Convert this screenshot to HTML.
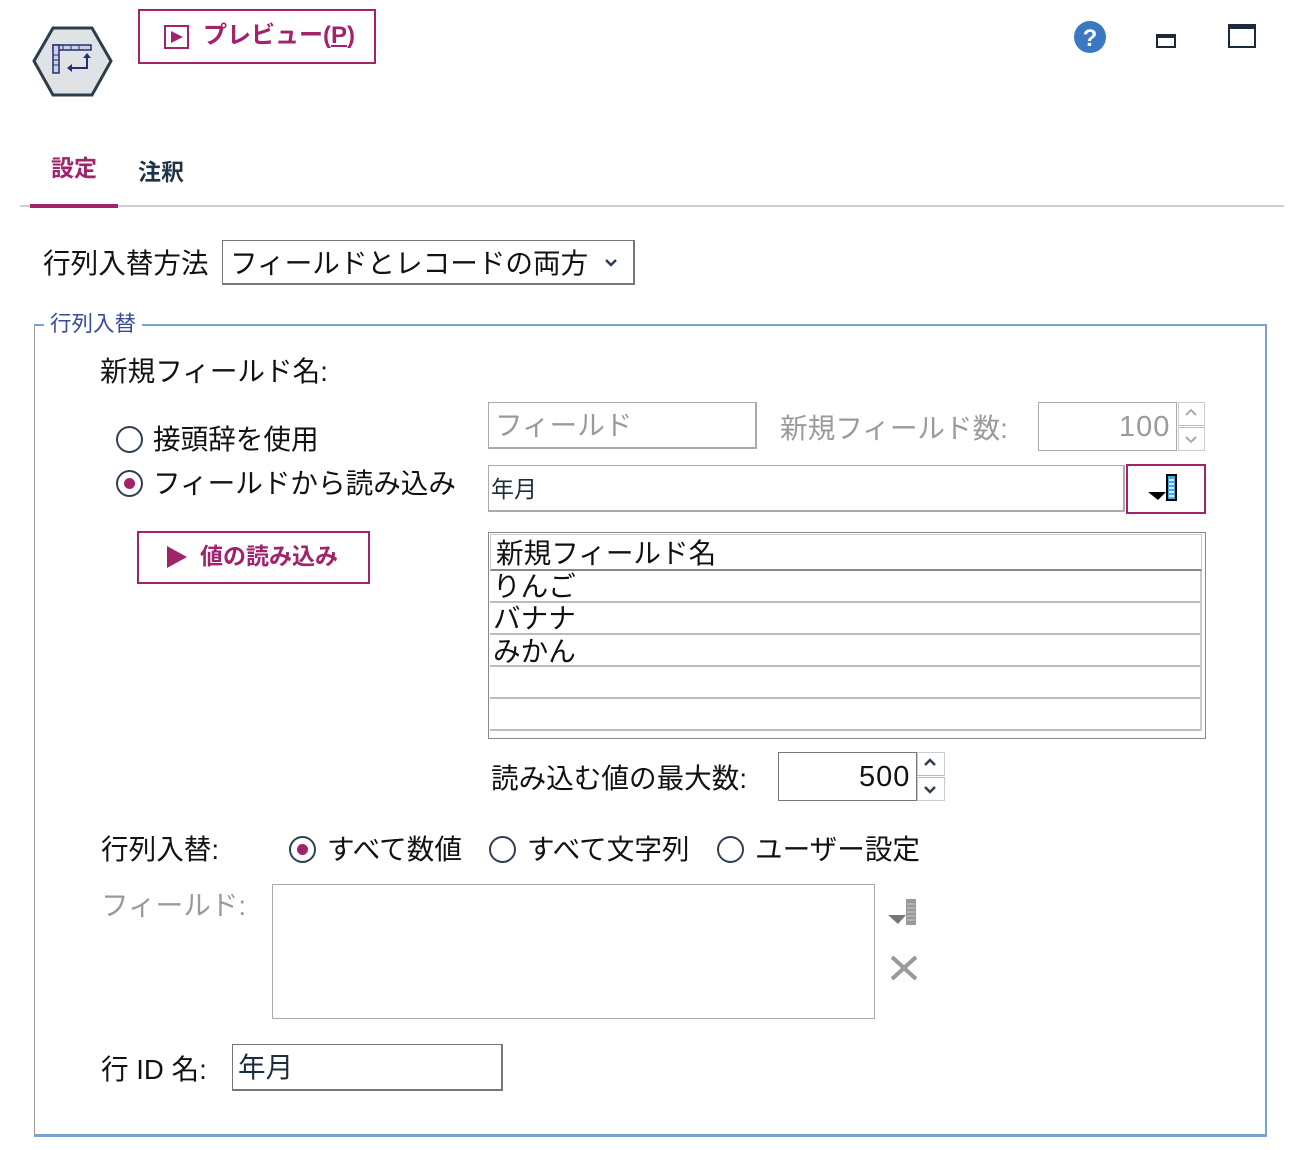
<!DOCTYPE html>
<html><head><meta charset="utf-8"><style>
*{margin:0;padding:0;box-sizing:border-box}
body{width:1302px;height:1150px;background:#fff;position:relative;overflow:hidden;font-family:"Liberation Sans","Noto Sans CJK JP",sans-serif;color:#111}
.a{position:absolute;white-space:nowrap;line-height:1}
.f26{font-size:27.6px}
.num{font-size:29px;letter-spacing:1px}
.box{position:absolute;background:#fff}
.radio{position:absolute;width:27px;height:27px;border:2px solid #2f3f4f;border-radius:50%;background:#fff}
.radio.on::after{content:"";position:absolute;left:6px;top:6px;width:11px;height:11px;border-radius:50%;background:#a0236c}
.gray{color:#9a9a9a}
</style></head><body>

<!-- node icon -->
<svg class="a" style="left:30px;top:24px" width="84" height="76" viewBox="30 24 84 76">
<polygon points="34,61 53,28 92,28 111,61 92,95 53,95" fill="#e0e3e6" stroke="#2c3e4c" stroke-width="3"/>
<rect x="53" y="45" width="38" height="5" fill="#c8d0e8" stroke="#27306e" stroke-width="1.5"/>
<path d="M63 45V50M71 45V50M79 45V50" stroke="#27306e" stroke-width="1"/>
<rect x="53" y="45" width="6" height="28" fill="#c8d0e8" stroke="#27306e" stroke-width="1.5"/>
<path d="M53 55H59M53 60H59M53 65H59" stroke="#27306e" stroke-width="1"/>
<path d="M87 55 V68 H72" fill="none" stroke="#27306e" stroke-width="2"/>
<path d="M83 58 L87 53 L91 58Z M72 64 L67 68 L72 72Z" fill="#27306e"/>
</svg>

<!-- preview button -->
<div class="box" style="left:138px;top:9px;width:238px;height:55px;border:2px solid #a0236c"></div>
<div class="box" style="left:164px;top:25px;width:25px;height:24px;border:2px solid #a0236c"></div>
<svg class="a" style="left:170px;top:30px" width="14" height="14"><path d="M1 1 L13 7 L1 13Z" fill="#a0236c"/></svg>
<div class="a" style="left:203px;top:24px;font-size:24px;font-weight:bold;color:#a0236c">プレビュー(<u>P</u>)</div>

<!-- top-right icons -->
<svg class="a" style="left:1073px;top:20px" width="34" height="34"><circle cx="17" cy="17" r="16" fill="#3a78c2"/><text x="17" y="26" text-anchor="middle" font-family="Liberation Sans" font-weight="bold" font-size="24" fill="#fff">?</text></svg>
<div class="box" style="left:1156px;top:34px;width:20px;height:14px;border:2px solid #1b2a38;border-top-width:4px"></div>
<div class="box" style="left:1228px;top:24px;width:28px;height:24px;border:2px solid #1b2a38;border-top-width:5px"></div>

<!-- tabs -->
<div class="a" style="left:51px;top:157px;font-size:23px;font-weight:bold;color:#a0236c">設定</div>
<div class="a" style="left:138px;top:161px;font-size:23px;font-weight:bold;color:#1e3345">注釈</div>
<div class="box" style="left:20px;top:205px;width:1264px;height:2px;background:#cfcfcf"></div>
<div class="box" style="left:30px;top:204px;width:88px;height:4px;background:#a0236c"></div>

<!-- method -->
<div class="a f26" style="left:43px;top:250px">行列入替方法</div>
<div class="box" style="left:222px;top:240px;width:413px;height:45px;border:1px solid #777;border-right-width:2px;border-bottom-width:2px"></div>
<div class="a f26" style="left:230px;top:250px">フィールドとレコードの両方</div>
<svg class="a" style="left:604px;top:258px" width="14" height="10"><path d="M2 2 L7 7 L12 2" fill="none" stroke="#2c3e50" stroke-width="2.5"/></svg>

<!-- group box -->
<div class="box" style="left:34px;top:324px;width:1233px;height:813px;border:1px solid #999;border-top:2px solid #78a3d0;border-right:2px solid #78a3d0;border-bottom:3px solid #78a3d0;background:transparent"></div>
<div class="a" style="left:44px;top:314px;font-size:21.5px;color:#3a4a9a;background:#fff;padding:0 6px">行列入替</div>

<div class="a f26" style="left:100px;top:358px">新規フィールド名:</div>

<div class="radio" style="left:116px;top:426px"></div>
<div class="a f26" style="left:153px;top:426px">接頭辞を使用</div>
<div class="radio on" style="left:116px;top:470px"></div>
<div class="a f26" style="left:153px;top:470px">フィールドから読み込み</div>

<div class="box" style="left:137px;top:531px;width:233px;height:53px;border:2px solid #a0236c"></div>
<svg class="a" style="left:166px;top:545px" width="22" height="24"><path d="M1 1 L21 12 L1 23Z" fill="#a0236c"/></svg>
<div class="a" style="left:200px;top:545px;font-size:23px;font-weight:bold;color:#a0236c">値の読み込み</div>

<div class="box" style="left:488px;top:402px;width:269px;height:47px;border:1px solid #aaa;border-right-width:2px;border-bottom-width:2px"></div>
<div class="a f26 gray" style="left:495px;top:412px">フィールド</div>
<div class="a f26 gray" style="left:780px;top:415px">新規フィールド数:</div>
<div class="box" style="left:1038px;top:402px;width:139px;height:49px;border:1px solid #aaa"></div>
<div class="a num gray" style="left:1119px;top:413px">100</div>
<div class="box" style="left:1178px;top:402px;width:27px;height:49px;border:1px solid #ccc"></div>
<div class="box" style="left:1178px;top:425px;width:27px;height:3px;border-top:1px solid #bbb;border-bottom:1px solid #bbb"></div>
<svg class="a" style="left:1184px;top:407px" width="14" height="40"><path d="M2 8 L7 3 L12 8 M2 30 L7 35 L12 30" fill="none" stroke="#aaa" stroke-width="2"/></svg>

<div class="box" style="left:488px;top:465px;width:637px;height:47px;border:1px solid #aaa;border-right-width:2px;border-bottom-width:2px"></div>
<div class="a" style="left:491px;top:478px;font-size:23px;color:#1e2d3b">年月</div>
<div class="box" style="left:1126px;top:464px;width:80px;height:50px;border:2px solid #a0236c"></div>
<svg class="a" style="left:1146px;top:472px" width="36" height="32"><path d="M2 20 H20 L12 28Z" fill="#000"/><rect x="21" y="3" width="9" height="25" fill="#4aa8e0" stroke="#000" stroke-width="2"/><path d="M23 8H28M23 12H28M23 16H28M23 20H28M23 24H28" stroke="#fff" stroke-width="1.5"/></svg>

<!-- table -->
<div class="box" style="left:488px;top:532px;width:718px;height:207px;border:1px solid #888"></div>
<div class="box" style="left:490px;top:534px;width:712px;height:37px;border:1px solid #ccc;border-bottom:2px solid #888"></div>
<div class="a f26" style="left:496px;top:540px">新規フィールド名</div>
<div class="box" style="left:490px;top:571px;width:712px;height:32px;border-bottom:2px solid #bbb"></div>
<div class="box" style="left:490px;top:603px;width:712px;height:32px;border-bottom:2px solid #bbb"></div>
<div class="box" style="left:490px;top:635px;width:712px;height:32px;border-bottom:2px solid #bbb"></div>
<div class="box" style="left:490px;top:667px;width:712px;height:32px;border-bottom:2px solid #bbb"></div>
<div class="box" style="left:490px;top:699px;width:712px;height:32px;border-bottom:2px solid #bbb"></div>
<div class="box" style="left:1200px;top:571px;width:2px;height:160px;background:#ccc"></div>
<div class="a f26" style="left:493px;top:573px">りんご</div>
<div class="a f26" style="left:493px;top:605px">バナナ</div>
<div class="a f26" style="left:493px;top:638px">みかん</div>

<div class="a f26" style="left:491px;top:765px">読み込む値の最大数:</div>
<div class="box" style="left:778px;top:752px;width:139px;height:49px;border:1px solid #777"></div>
<div class="a num" style="left:859px;top:763px">500</div>
<div class="box" style="left:917px;top:752px;width:28px;height:49px;border:1px solid #ccc"></div>
<div class="box" style="left:917px;top:775px;width:28px;height:3px;border-top:1px solid #bbb;border-bottom:1px solid #bbb"></div>
<svg class="a" style="left:923px;top:757px" width="14" height="40"><path d="M2 8 L7 3 L12 8 M2 30 L7 35 L12 30" fill="none" stroke="#2c3e50" stroke-width="2.5"/></svg>

<div class="a f26" style="left:101px;top:836px">行列入替:</div>
<div class="radio on" style="left:289px;top:836px"></div>
<div class="a f26" style="left:327px;top:836px">すべて数値</div>
<div class="radio" style="left:489px;top:836px"></div>
<div class="a f26" style="left:527px;top:836px">すべて文字列</div>
<div class="radio" style="left:717px;top:836px"></div>
<div class="a f26" style="left:755px;top:836px">ユーザー設定</div>

<div class="a f26 gray" style="left:101px;top:892px">フィールド:</div>
<div class="box" style="left:272px;top:884px;width:603px;height:135px;border:1px solid #aaa"></div>
<svg class="a" style="left:886px;top:897px" width="36" height="32"><path d="M2 18 H20 L12 27Z" fill="#777"/><rect x="20" y="2" width="10" height="26" fill="#999"/><path d="M21 7H29M21 11H29M21 15H29M21 19H29M21 23H29" stroke="#bbb" stroke-width="1.5"/></svg>
<svg class="a" style="left:889px;top:955px" width="30" height="26"><path d="M3 2 L27 24 M27 2 L3 24" stroke="#999" stroke-width="4"/></svg>

<div class="a f26" style="left:101px;top:1056px">行 ID 名:</div>
<div class="box" style="left:232px;top:1044px;width:271px;height:47px;border:1px solid #777;border-right-width:2px;border-bottom-width:2px"></div>
<div class="a f26" style="left:238px;top:1054px;color:#1e2d3b">年月</div>

</body></html>
